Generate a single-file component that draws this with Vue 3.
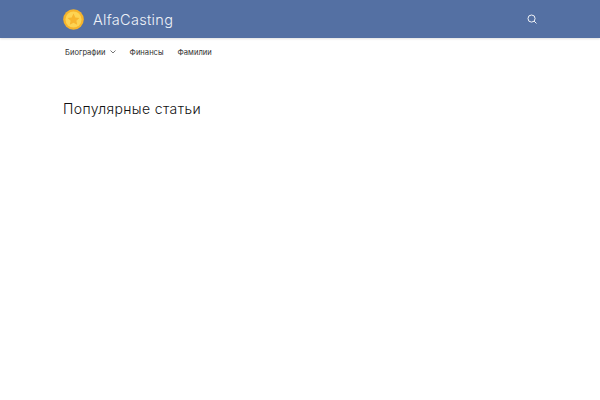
<template>
  <div class="page">
    <header class="site-header">
      <div class="container header-inner">
        <a class="brand">
          <svg class="logo" width="21" height="21" viewBox="0 0 22 22">
            <circle cx="11" cy="11" r="10.8" fill="#f6b42c" />
            <circle cx="11" cy="11" r="8.4" fill="#fdd453" />
            <path d="M11 4.8l1.9 4 4.3.5-3.2 2.9.9 4.3L11 14.4l-3.9 2.1.9-4.3-3.2-2.9 4.3-.5z" fill="#f7b52e" />
          </svg>
          <span class="brand-name">AlfaCasting</span>
        </a>
        <button class="search" aria-label="Поиск">
          <svg width="10" height="10" viewBox="0 0 11 11" fill="none" stroke="#fff" stroke-width="1">
            <circle cx="5" cy="5" r="3.9" />
            <path d="M7.8 7.8l2.6 2.6" />
          </svg>
        </button>
      </div>
    </header>

    <nav class="site-nav">
      <div class="container nav-inner">
        <a class="nav-item">
          Биографии
          <svg class="caret" width="6" height="4" viewBox="0 0 6 4" fill="none" stroke="#666" stroke-width="0.9">
            <path d="M.5.5L3 3 5.5.5" />
          </svg>
        </a>
        <a class="nav-item">Финансы</a>
        <a class="nav-item">Фамилии</a>
      </div>
    </nav>

    <main class="container content">
      <h2 class="section-title">Популярные статьи</h2>
    </main>
  </div>
</template>

<script setup>
</script>

<style>
body {
  background: #fff;
}
</style>

<style scoped>
.page {
  width: 600px;
  height: 400px;
  overflow: hidden;
  font-family: "Inter", "Noto Sans", sans-serif;
  color: #222;
}
.container {
  padding: 0 63px;
}
.site-header {
  height: 38px;
  background: #5470a3;
  box-shadow: 0 1px 2px rgba(0, 0, 0, 0.12);
}
.header-inner {
  height: 100%;
  display: flex;
  align-items: center;
  justify-content: space-between;
}
.brand {
  display: flex;
  align-items: center;
  gap: 9px;
}
.logo {
  display: block;
  margin-top: 1px;
}
.brand-name {
  font-size: 14.5px;
  font-weight: 300;
  color: #eef2f8;
  letter-spacing: 0.3px;
}
.search {
  display: flex;
  padding: 0;
  border: 0;
  background: none;
}
.site-nav {
  height: 28px;
}
.nav-inner {
  height: 100%;
  display: flex;
  align-items: center;
  gap: 14px;
  padding-left: 65px;
}
.nav-item {
  display: flex;
  align-items: center;
  gap: 4px;
  font-size: 7.6px;
  color: #333;
}
.caret {
  display: block;
}
.content {
  padding-top: 33px;
}
.section-title {
  margin: 0;
  font-size: 14px;
  line-height: 20px;
  font-weight: 300;
  color: #111;
  letter-spacing: 0.37px;
}
</style>
